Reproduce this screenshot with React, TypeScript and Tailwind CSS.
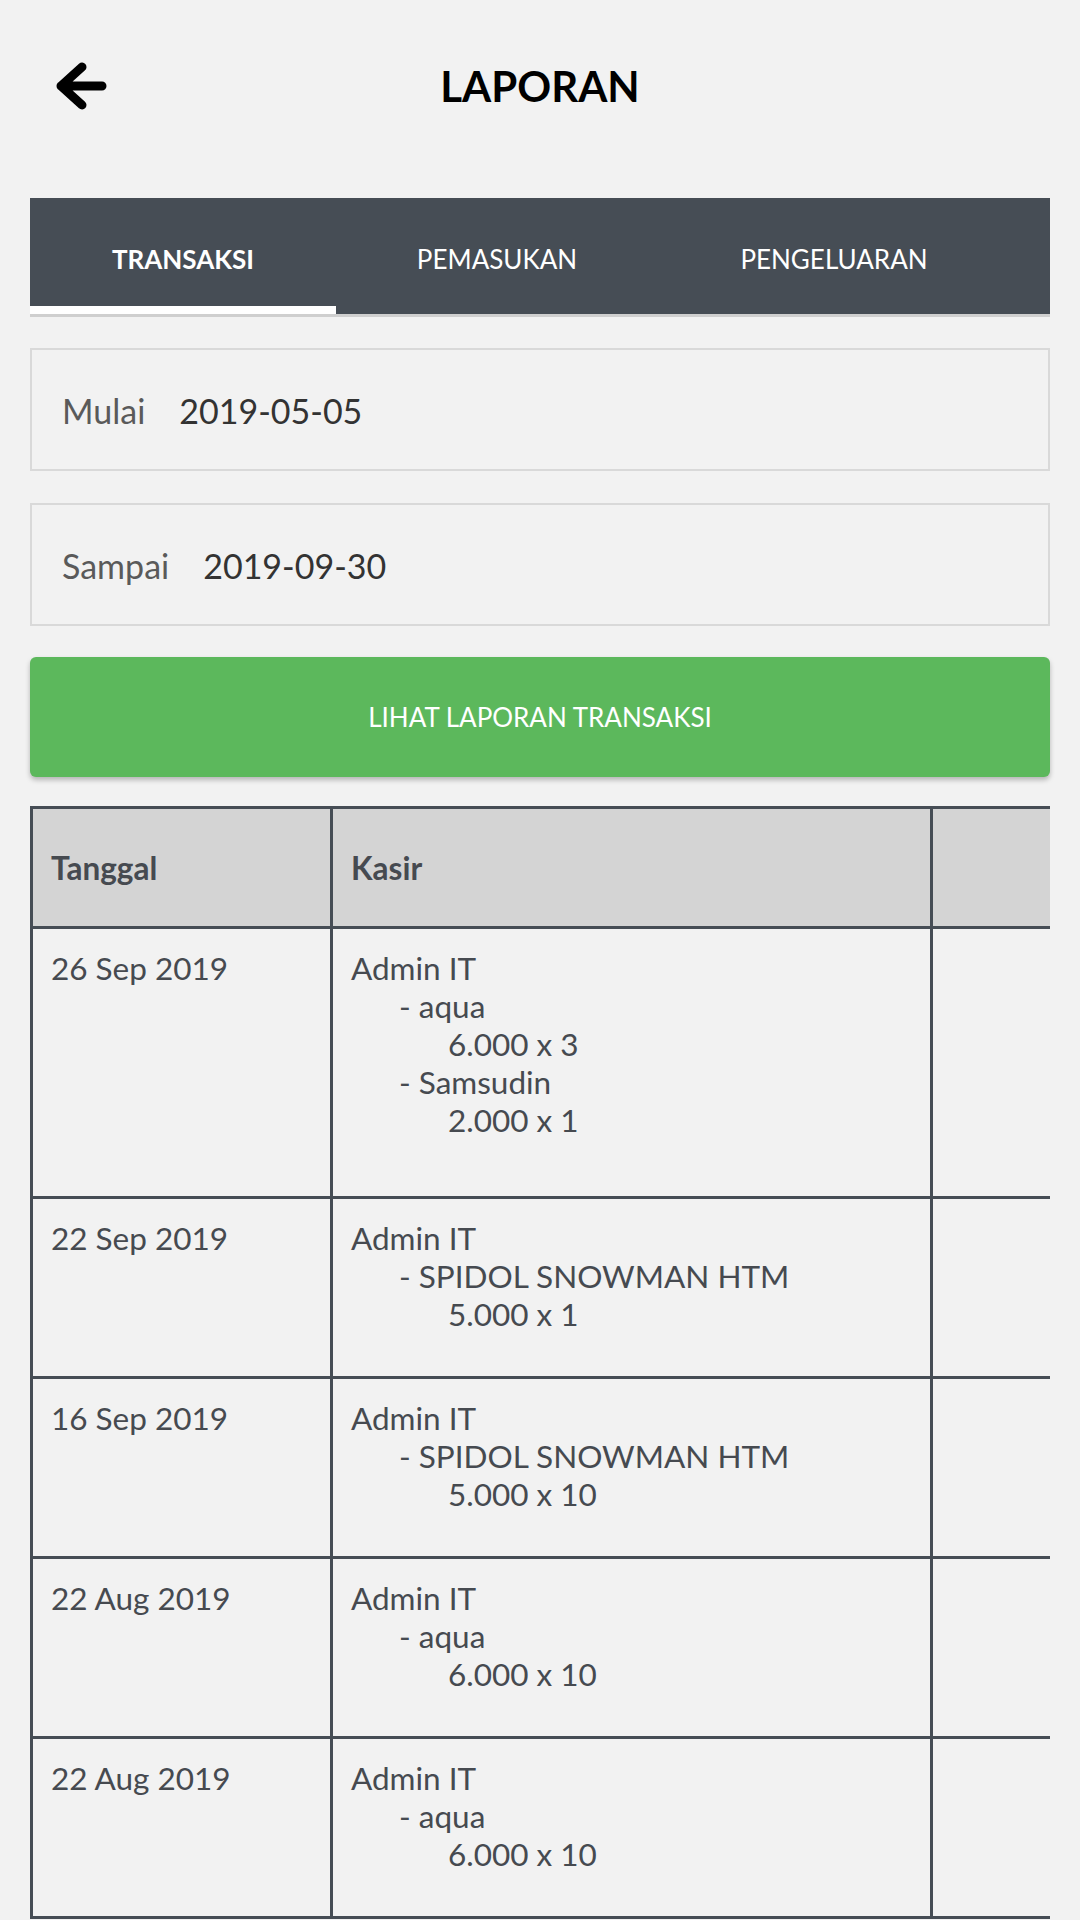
import React from "react";

type Item = { name: string; qty: string };
type Row = { date: string; cashier: string; items: Item[] };

const rows: Row[] = [
  {
    date: "26 Sep 2019",
    cashier: "Admin IT",
    items: [
      { name: "aqua", qty: "6.000 x 3" },
      { name: "Samsudin", qty: "2.000 x 1" },
    ],
  },
  { date: "22 Sep 2019", cashier: "Admin IT", items: [{ name: "SPIDOL SNOWMAN HTM", qty: "5.000 x 1" }] },
  { date: "16 Sep 2019", cashier: "Admin IT", items: [{ name: "SPIDOL SNOWMAN HTM", qty: "5.000 x 10" }] },
  { date: "22 Aug 2019", cashier: "Admin IT", items: [{ name: "aqua", qty: "6.000 x 10" }] },
  { date: "22 Aug 2019", cashier: "Admin IT", items: [{ name: "aqua", qty: "6.000 x 10" }] },
];

const tabs = [
  { label: "TRANSAKSI", width: "w-[306px]", active: true },
  { label: "PEMASUKAN", width: "w-[322px]", active: false },
  { label: "PENGELUARAN", width: "w-[352px]", active: false },
];

function BackArrow() {
  return (
    <svg width="60" height="56" viewBox="0 0 60 56" fill="none">
      <path
        d="M30 9 L9 28 L30 47 M9 28 H50"
        stroke="#000"
        strokeWidth="9"
        strokeLinecap="round"
        strokeLinejoin="round"
      />
    </svg>
  );
}

function DateField({ label, value }: { label: string; value: string }) {
  return (
    <div className="flex h-[123px] items-center gap-[34px] border-2 border-[#d9d9d9] px-[30px] pt-[2px] text-[34px]">
      <span className="text-[#5a5a5a]">{label}</span>
      <span className="text-[#333333]">{value}</span>
    </div>
  );
}

export default function App() {
  return (
    <div className="h-screen overflow-hidden bg-[#f2f2f2] font-['Lato','Noto_Sans',sans-serif]">
      {/* top bar */}
      <div className="flex h-[172px] items-center px-[52px]">
        <div className="w-[60px]">
          <BackArrow />
        </div>
        <h1 className="flex-1 text-center text-[42px] font-bold text-black">LAPORAN</h1>
        <div className="w-[60px]" />
      </div>

      <div className="mx-[30px] mt-[26px]">
        {/* tabs */}
        <div className="flex h-[119px] border-b-[3px] border-[#cfcfcf] bg-[#464d55]">
          {tabs.map((t) => (
            <div key={t.label} className={`relative flex h-[116px] items-center justify-center pt-[6px] ${t.width}`}>
              <span className={`text-[26px] text-white ${t.active ? "font-bold" : "font-normal"}`}>{t.label}</span>
              {t.active && <div className="absolute bottom-0 left-0 h-[8px] w-full bg-white" />}
            </div>
          ))}
        </div>

        <div className="mt-[31px] flex flex-col gap-[32px]">
          <DateField label="Mulai" value="2019-05-05" />
          <DateField label="Sampai" value="2019-09-30" />
        </div>

        <button className="mt-[31px] flex h-[120px] w-full items-center justify-center rounded-[6px] bg-[#5cb85c] text-[26px] text-white shadow-[0_3px_5px_rgba(0,0,0,0.25)]">
          LIHAT LAPORAN TRANSAKSI
        </button>

        <div className="mt-[29px] overflow-hidden">
          <div className="w-[1200px] border-l-[3px] border-t-[3px] border-[#464d55] text-[31.5px] leading-[38px] text-[#464a50]">
            <div className="flex h-[120px] border-b-[3px] border-[#464d55] bg-[#d4d4d4] font-bold">
              <div className="flex w-[300px] items-center border-r-[3px] border-[#464d55] pl-[18px]">Tanggal</div>
              <div className="flex w-[600px] items-center border-r-[3px] border-[#464d55] pl-[18px]">Kasir</div>
              <div className="w-[297px] border-r-[3px] border-[#464d55]" />
            </div>
            {rows.map((r, i) => (
              <div key={i} className="flex border-b-[3px] border-[#464d55]">
                <div className={`w-[300px] border-r-[3px] border-[#464d55] pl-[18px] pt-[20px] ${i === 0 ? "pb-[57px]" : "pb-[43px]"}`}>
                  {r.date}
                </div>
                <div className={`w-[600px] border-r-[3px] border-[#464d55] pl-[18px] pt-[20px] ${i === 0 ? "pb-[57px]" : "pb-[43px]"}`}>
                  <div>{r.cashier}</div>
                  {r.items.map((it, j) => (
                    <div key={j}>
                      <div className="pl-[48px]">- {it.name}</div>
                      <div className="pl-[97px]">{it.qty}</div>
                    </div>
                  ))}
                </div>
                <div className="w-[297px] border-r-[3px] border-[#464d55]" />
              </div>
            ))}
          </div>
        </div>
      </div>
    </div>
  );
}
